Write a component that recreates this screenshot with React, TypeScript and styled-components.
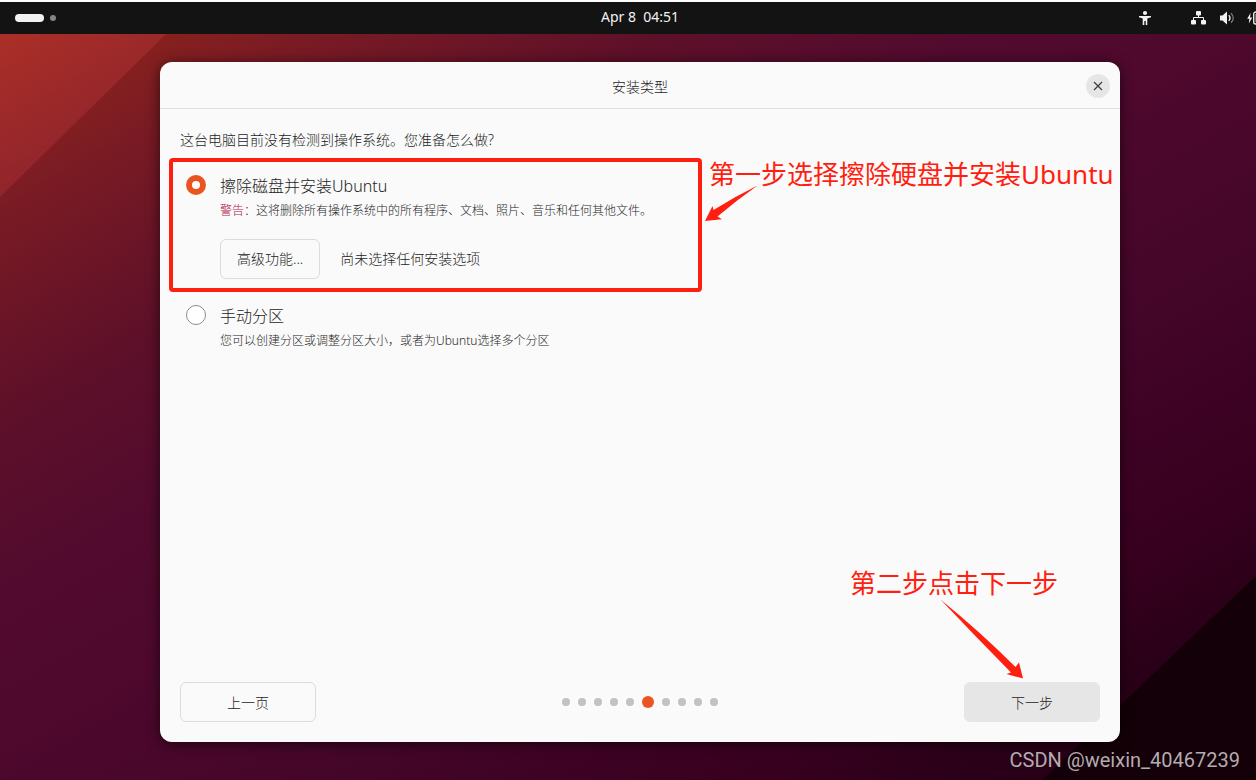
import React from 'react';
import styled, { createGlobalStyle, css } from 'styled-components';

const RED = '#ff1f10';
const ORANGE = '#e95420';

const GlobalStyle = createGlobalStyle`
  *, *::before, *::after { box-sizing: border-box; }
  body {
    margin: 0;
    font-family: 'Noto Sans', 'Noto Sans CJK SC', sans-serif;
    font-size: 14px;
    line-height: 20px;
    color: #1c1c1c;
  }
  button, input { font: inherit; color: inherit; margin: 0; }
`;

const Screen = styled.div`
  position: relative;
  display: flex;
  flex-direction: column;
  min-height: 100vh;
  overflow: hidden;
  border-top: 2px solid #fdfdfd;
`;

const TopBar = styled.header`
  display: grid;
  grid-template-columns: 1fr auto 1fr;
  align-items: center;
  height: 32px;
  margin-right: -24px;
  background: #131313;
  color: #f2f2f2;
`;

const Workspaces = styled.div`
  display: flex;
  align-items: center;
  gap: 6px;
  padding-left: 15px;
`;

const Workspace = styled.span<{ $active?: boolean }>`
  width: ${p => (p.$active ? '29px' : '6px')};
  height: ${p => (p.$active ? '8px' : '6px')};
  border-radius: 4px;
  background: ${p => (p.$active ? '#f2f2f2' : '#858585')};
`;

const Clock = styled.time`
  white-space: pre;
  line-height: 30px;
  padding-bottom: 2px;
`;

const Status = styled.div`
  display: flex;
  align-items: center;
  justify-content: flex-end;
  gap: 12px;
  padding-right: 9px;

  svg { display: block; }
  svg:first-child { margin-right: 27px; }
`;

const Desktop = styled.main`
  position: relative;
  isolation: isolate;
  flex: 1;
  display: flex;
  padding: 28px 136px 38px 160px;
  background: linear-gradient(
    150deg,
    #8c211c 4%, #86201f 7%, #7a1b24 12%, #5e1029 26%, #520b2e 38%,
    #4f092d 47%, #45062a 62%, #38001f 80%, #2a0018 88%, #200012 100%
  );

  &::before, &::after {
    content: '';
    position: absolute;
    inset: 0;
    z-index: -1;
  }
  &::before {
    clip-path: polygon(0 0, 166px 0, 0 163px);
    background: linear-gradient(150deg, #ab2f27 0, #8f242c 150px);
  }
  &::after {
    clip-path: polygon(100% calc(100% - 204px), 100% 100%, calc(100% - 214px) 100%);
    background: #140008;
  }
`;

const Window = styled.section`
  position: relative;
  flex: 1;
  display: flex;
  flex-direction: column;
  border-radius: 12px;
  background: #fafafa;
  box-shadow: 0 2px 14px rgba(0, 0, 0, 0.6);
  font-weight: 300;
`;

const TitleBar = styled.div`
  display: grid;
  grid-template-columns: 1fr auto 1fr;
  align-items: center;
  height: 47px;
  padding: 2px 10px 0;
  border-bottom: 1px solid #dfdfdf;
`;

const WindowTitle = styled.h1`
  grid-column: 2;
  margin: 0;
  padding-top: 2px;
  font-size: 14px;
  font-weight: inherit;
  line-height: 20px;
`;

const CloseButton = styled.button`
  justify-self: end;
  display: grid;
  place-items: center;
  width: 24px;
  height: 24px;
  padding: 0;
  border: 0;
  border-radius: 50%;
  background: #e6e6e6;
`;

const Content = styled.form`
  flex: 1;
  display: flex;
  flex-direction: column;
  padding: 21px 20px 20px;
`;

const Choices = styled.fieldset`
  flex: 1;
  min-width: 0;
  margin: 0;
  padding: 0;
  border: 0;
`;

const Question = styled.legend`
  padding: 0;
  margin-bottom: 24px;
  line-height: 20px;
`;

const Option = styled.div`
  display: grid;
  grid-template-columns: 20px 1fr;
  column-gap: 14px;
  padding-left: 6px;
  margin-bottom: 25px;
`;

const Radio = styled.input`
  appearance: none;
  width: 20px;
  height: 20px;
  margin-top: 1px;
  border: 1px solid #8c8c8c;
  border-radius: 50%;
  background: #fff;

  &:checked { border: 6px solid ${ORANGE}; }
`;

const OptionTitle = styled.label`
  display: block;
  font-size: 16px;
  line-height: 24px;
`;

const Hint = styled.p`
  margin: 1px 0 0;
  font-size: 12px;
  line-height: 24px;
  color: #262626;
`;

const Warning = styled.span`
  color: #b01548;
`;

const Advanced = styled.div`
  display: flex;
  align-items: center;
  gap: 20px;
  margin-top: 16px;
`;

const Button = styled.button<{ $filled?: boolean; $wide?: boolean }>`
  height: 40px;
  padding: 0 16px;
  border: 1px solid #dcdcdc;
  border-radius: 6px;
  background: transparent;
  ${p => p.$wide && css`
    width: 136px;
    padding-top: 2px;
  `}
  ${p => p.$filled && css`
    border-color: #e6e6e6;
    background: #e6e6e6;
  `}
`;

const Footer = styled.div`
  display: flex;
  align-items: center;
  justify-content: space-between;
`;

const Steps = styled.div`
  display: flex;
  align-items: center;
  gap: 8px;
`;

const Step = styled.span<{ $current: boolean }>`
  width: ${p => (p.$current ? 12 : 8)}px;
  height: ${p => (p.$current ? 12 : 8)}px;
  border-radius: 50%;
  background: ${p => (p.$current ? ORANGE : '#c2c2c2')};
`;

const Highlight = styled.div`
  position: absolute;
  left: 9px;
  top: 96px;
  width: 533px;
  height: 134px;
  border: 4px solid ${RED};
  border-radius: 4px;
  pointer-events: none;
`;

const Note = styled.p`
  position: absolute;
  margin: 0;
  font-size: 26px;
  font-weight: 400;
  line-height: 36px;
  white-space: nowrap;
  color: ${RED};
`;

const FirstNote = styled(Note)`
  left: 549px;
  top: 94px;
`;

const SecondNote = styled(Note)`
  right: 62px;
  bottom: 141px;
`;

const Arrow = styled.svg`
  position: absolute;
  fill: ${RED};
  pointer-events: none;
`;

const FirstArrow = styled(Arrow)`
  left: 545px;
  top: 123px;
`;

const SecondArrow = styled(Arrow)`
  right: 96px;
  bottom: 62px;
`;

const Watermark = styled.div`
  position: absolute;
  right: 16px;
  bottom: 8px;
  font-family: Roboto, sans-serif;
  font-size: 20px;
  line-height: 24px;
  color: #b3acb0;
`;

const STEP_COUNT = 10;
const CURRENT_STEP = 5;

export default function App() {
  return (
    <Screen>
      <GlobalStyle />
      <TopBar>
        <Workspaces>
          <Workspace $active />
          <Workspace />
        </Workspaces>
        <Clock>{'Apr 8  04:51'}</Clock>
        <Status>
          <svg width="14" height="16" viewBox="0 0 14 16" fill="#f2f2f2" aria-hidden="true">
            <circle cx="7" cy="3" r="2.1" />
            <path d="M1 6h12v1.2L9.3 8.4V15H7.7v-4H6.3v4H4.7V8.4L1 7.2z" />
          </svg>
          <svg width="16" height="16" viewBox="0 0 16 16" fill="#f2f2f2" aria-hidden="true">
            <rect x="5" y="1" width="5" height="4.4" rx="1" />
            <rect x="0" y="10" width="5" height="4.4" rx="1" />
            <rect x="10" y="10" width="5" height="4.4" rx="1" />
            <path d="M7.5 5v3M2.5 10.5V7.5h10v3" fill="none" stroke="#f2f2f2" strokeWidth="1" />
          </svg>
          <svg width="16" height="16" viewBox="0 0 16 16" aria-hidden="true">
            <path d="M1 5.5h2.5L8 1.4v13.2L3.5 10.5H1z" fill="#f2f2f2" />
            <path d="M9.7 5.2c1.7 1.6 1.7 4 0 5.6" fill="none" stroke="#f2f2f2" strokeWidth="1.4" />
            <path d="M12 3.2c3 2.8 3 6.8 0 9.6" fill="none" stroke="#777" strokeWidth="1.3" />
          </svg>
          <svg width="24" height="16" viewBox="0 0 24 16" aria-hidden="true">
            <path d="M3.6 2.8 0.2 8.8h2.2l-.6 4.6 3.4-6H3z" fill="#f2f2f2" />
            <rect x="6.7" y="2" width="14" height="12" rx="2" fill="none" stroke="#f2f2f2" strokeWidth="1.3" />
            <rect x="8.6" y="4" width="10" height="8" fill="#f2f2f2" />
          </svg>
        </Status>
      </TopBar>

      <Desktop>
        <Window>
          <TitleBar>
            <WindowTitle>安装类型</WindowTitle>
            <CloseButton type="button" aria-label="关闭">
              <svg width="10" height="10" viewBox="0 0 10 10" aria-hidden="true">
                <path d="M1 1l8 8M9 1L1 9" stroke="#3d3d3d" strokeWidth="1.2" />
              </svg>
            </CloseButton>
          </TitleBar>

          <Content onSubmit={e => e.preventDefault()}>
            <Choices>
              <Question>这台电脑目前没有检测到操作系统。您准备怎么做?</Question>
              <Option>
                <Radio type="radio" name="method" id="erase" defaultChecked />
                <div>
                  <OptionTitle htmlFor="erase">擦除磁盘并安装Ubuntu</OptionTitle>
                  <Hint>
                    <Warning>警告：</Warning>
                    这将删除所有操作系统中的所有程序、文档、照片、音乐和任何其他文件。
                  </Hint>
                  <Advanced>
                    <Button type="button">高级功能...</Button>
                    <span>尚未选择任何安装选项</span>
                  </Advanced>
                </div>
              </Option>
              <Option>
                <Radio type="radio" name="method" id="manual" />
                <div>
                  <OptionTitle htmlFor="manual">手动分区</OptionTitle>
                  <Hint>您可以创建分区或调整分区大小，或者为Ubuntu选择多个分区</Hint>
                </div>
              </Option>
            </Choices>

            <Footer>
              <Button type="button" $wide>上一页</Button>
              <Steps>
                {Array.from({ length: STEP_COUNT }, (_, i) => (
                  <Step key={i} $current={i === CURRENT_STEP} />
                ))}
              </Steps>
              <Button type="submit" $wide $filled>下一步</Button>
            </Footer>
          </Content>

          <Highlight />
          <FirstNote>第一步选择擦除硬盘并安装Ubuntu</FirstNote>
          <FirstArrow width="54" height="38" viewBox="0 0 54 38" aria-hidden="true">
            <path d="M52.5 0.5 Q30 11.5 8.5 25 L7.5 21 L0 36 L17 34.3 L12.5 31.5 Q32 15 52.5 0.5 Z" />
          </FirstArrow>
          <SecondNote>第二步点击下一步</SecondNote>
          <SecondArrow width="84" height="82" viewBox="0 0 84 82" aria-hidden="true">
            <path d="M0.5 1.5 Q41 34.5 75.5 69 L79 64.5 L83 80.5 L66.5 76 L71 74.5 Q36 39 0.5 1.5 Z" />
          </SecondArrow>
        </Window>
      </Desktop>

      <Watermark>CSDN @weixin_40467239</Watermark>
    </Screen>
  );
}
